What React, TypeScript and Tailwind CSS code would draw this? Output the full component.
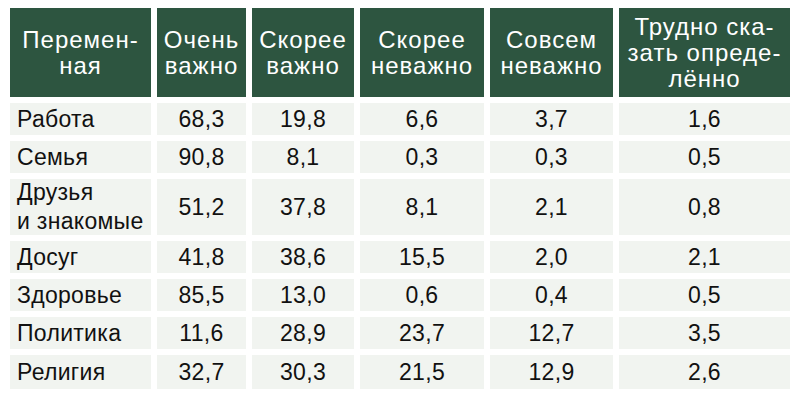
const headers = [
  ["Перемен-", "ная"],
  ["Очень", "важно"],
  ["Скорее", "важно"],
  ["Скорее", "неважно"],
  ["Совсем", "неважно"],
  ["Трудно ска-", "зать опреде-", "лённо"],
];

const rows: { label: string[]; values: string[] }[] = [
  { label: ["Работа"], values: ["68,3", "19,8", "6,6", "3,7", "1,6"] },
  { label: ["Семья"], values: ["90,8", "8,1", "0,3", "0,3", "0,5"] },
  { label: ["Друзья", "и знакомые"], values: ["51,2", "37,8", "8,1", "2,1", "0,8"] },
  { label: ["Досуг"], values: ["41,8", "38,6", "15,5", "2,0", "2,1"] },
  { label: ["Здоровье"], values: ["85,5", "13,0", "0,6", "0,4", "0,5"] },
  { label: ["Политика"], values: ["11,6", "28,9", "23,7", "12,7", "3,5"] },
  { label: ["Религия"], values: ["32,7", "30,3", "21,5", "12,9", "2,6"] },
];

export default function App() {
  return (
    <div className="w-[800px] h-[400px] bg-white pt-[8px] pl-[10px] font-['Liberation_Sans',Arial,sans-serif]">
      <div className="grid grid-cols-[141px_89px_102px_124px_123px_171px] grid-rows-[89px_32px_32px_56px_32px_32px_32px_34px] gap-[6px]">
        {headers.map((lines, i) => (
          <div
            key={i}
            className="flex flex-col items-center justify-center bg-[#2d5540] text-white text-[24px] leading-[26px] tracking-[1px] text-center"
          >
            {lines.map((l) => (
              <span key={l}>{l}</span>
            ))}
          </div>
        ))}
        {rows.map((row) => (
          <>
            <div
              key={row.label[0]}
              className="flex flex-col justify-center bg-[#f1f4f0] pl-[7px] text-[#111] text-[23px] leading-[29px] tracking-[0.3px]"
            >
              {row.label.map((l) => (
                <span key={l}>{l}</span>
              ))}
            </div>
            {row.values.map((v, j) => (
              <div
                key={row.label[0] + j}
                className="flex items-center justify-center bg-[#f1f4f0] text-[#111] text-[23px] tracking-[0.3px]"
              >
                {v}
              </div>
            ))}
          </>
        ))}
      </div>
    </div>
  );
}
